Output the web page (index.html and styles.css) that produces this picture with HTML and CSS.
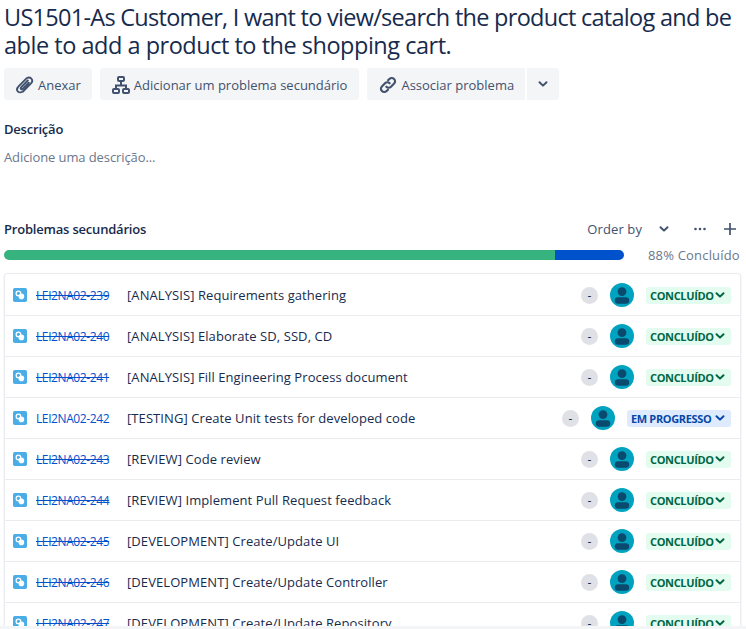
FILE: index.html
```html
<!DOCTYPE html>
<html lang="en">
<head>
<meta charset="UTF-8">
<title>US1501</title>
<link rel="stylesheet" href="styles.css">
</head>
<body>

<svg class="defs" width="0" height="0">
  <symbol id="chev" viewBox="0 0 12 12"><path d="M2.5 4.2 6 7.6l3.5-3.4" fill="none" stroke="currentColor" stroke-width="2" stroke-linecap="round" stroke-linejoin="round"/></symbol>
  <symbol id="subtask" viewBox="0 0 16 16"><rect width="16" height="16" rx="2" fill="#4BADE8"/><circle cx="6.200" cy="6.200" r="2.600" fill="#4BADE8" stroke="#fff" stroke-width="1.400"/><circle cx="9.600" cy="9.600" r="3.200" fill="#fff"/></symbol>
  <symbol id="user" viewBox="0 0 24 24"><circle cx="12" cy="12" r="12" fill="#00A3BF"/><circle cx="12" cy="8.6" r="4.4" fill="#0B4A6F"/><rect x="4.8" y="14.2" width="14.4" height="6.6" rx="3.3" fill="#0B4A6F"/></symbol>
</svg>

<div class="page">
  <h1>US1501-As Customer, I want to view/search the product catalog and be <span class="title-end">able to add a product to the shopping cart.</span></h1>

  <div class="toolbar">
    <button class="btn btn-attach">
      <svg width="20" height="20" viewBox="0 0 20 20"><path d="M8 16.6 16 8.4c1.5-1.6 1.4-3.7.1-5-1.3-1.300-3.400-1.300-4.900.2L3.800 11.200c-2 2-2 4.200-.8 5.400 1.200 1.200 3.400 1.200 5.400-.8l6.200-6.300M12.800 5.500 6.300 12.100c-.7.800-.7 1.500-.3 1.900.4.400 1.200.4 1.900-.3l5.900-6" fill="none" stroke="currentColor" stroke-width="1.900" stroke-linecap="round"/></svg>
      Anexar
    </button>
    <button class="btn">
      <svg width="20" height="20" viewBox="0 0 20 20" fill="none" stroke="currentColor" stroke-width="2"><rect x="7" y="2" width="6" height="4" rx="1"/><rect x="2" y="14" width="6" height="4" rx="1"/><rect x="12" y="14" width="6" height="4" rx="1"/><path d="M10 6v4.500M5 14v-3.500h10V14"/></svg>
      Adicionar um problema secundário
    </button>
    <div class="split">
      <button class="btn btn-left">
        <svg width="20" height="20" viewBox="0 0 20 20" fill="none" stroke="currentColor" stroke-width="2.100" stroke-linecap="round"><path d="M8.300 11.700a3.300 3.300 0 0 0 4.700 0l3.100-3.100a3.300 3.300 0 0 0-4.700-4.700L10 5.300"/><path d="M11.700 8.300a3.300 3.300 0 0 0-4.700 0l-3.100 3.100a3.300 3.300 0 0 0 4.700 4.700l1.400-1.400"/></svg>
        Associar problema
      </button>
      <button class="btn btn-right"><svg width="12" height="12"><use href="#chev"/></svg></button>
    </div>
  </div>

  <h2 class="desc-title">Descrição</h2>
  <p class="desc-empty">Adicione uma descrição...</p>

  <div class="sub-head">
    <h2>Problemas secundários</h2>
    <div class="sub-actions">
      <span>Order by</span>
      <svg class="order-chev" width="12" height="12"><use href="#chev"/></svg>
      <svg class="more" width="16" height="16" viewBox="0 0 16 16" fill="currentColor"><circle cx="3.500" cy="8" r="1.300"/><circle cx="8" cy="8" r="1.300"/><circle cx="12.500" cy="8" r="1.300"/></svg>
      <svg class="plus" width="14" height="14" viewBox="0 0 14 14" fill="none" stroke="currentColor" stroke-width="1.700"><path d="M7 1v12M1 7h12"/></svg>
    </div>
  </div>

  <div class="progress-row">
    <div class="bar"><div class="bar-done"></div><div class="bar-doing"></div></div>
    <span class="pct">88% Concluído</span>
  </div>

  <div class="card">
    <div class="row">
      <svg class="type"><use href="#subtask"/></svg>
      <a class="key done">LEI2NA02-239</a>
      <span class="summary">[ANALYSIS] Requirements gathering</span>
      <span class="prio">-</span>
      <svg class="avatar"><use href="#user"/></svg>
      <span class="status ok">CONCLUÍDO<svg width="12" height="12"><use href="#chev"/></svg></span>
    </div>
    <div class="row">
      <svg class="type"><use href="#subtask"/></svg>
      <a class="key done">LEI2NA02-240</a>
      <span class="summary">[ANALYSIS] Elaborate SD, SSD, CD</span>
      <span class="prio">-</span>
      <svg class="avatar"><use href="#user"/></svg>
      <span class="status ok">CONCLUÍDO<svg width="12" height="12"><use href="#chev"/></svg></span>
    </div>
    <div class="row">
      <svg class="type"><use href="#subtask"/></svg>
      <a class="key done">LEI2NA02-241</a>
      <span class="summary">[ANALYSIS] Fill Engineering Process document</span>
      <span class="prio">-</span>
      <svg class="avatar"><use href="#user"/></svg>
      <span class="status ok">CONCLUÍDO<svg width="12" height="12"><use href="#chev"/></svg></span>
    </div>
    <div class="row">
      <svg class="type"><use href="#subtask"/></svg>
      <a class="key">LEI2NA02-242</a>
      <span class="summary">[TESTING] Create Unit tests for developed code</span>
      <span class="prio">-</span>
      <svg class="avatar"><use href="#user"/></svg>
      <span class="status doing">EM PROGRESSO<svg width="12" height="12"><use href="#chev"/></svg></span>
    </div>
    <div class="row">
      <svg class="type"><use href="#subtask"/></svg>
      <a class="key done">LEI2NA02-243</a>
      <span class="summary">[REVIEW] Code review</span>
      <span class="prio">-</span>
      <svg class="avatar"><use href="#user"/></svg>
      <span class="status ok">CONCLUÍDO<svg width="12" height="12"><use href="#chev"/></svg></span>
    </div>
    <div class="row">
      <svg class="type"><use href="#subtask"/></svg>
      <a class="key done">LEI2NA02-244</a>
      <span class="summary">[REVIEW] Implement Pull Request feedback</span>
      <span class="prio">-</span>
      <svg class="avatar"><use href="#user"/></svg>
      <span class="status ok">CONCLUÍDO<svg width="12" height="12"><use href="#chev"/></svg></span>
    </div>
    <div class="row">
      <svg class="type"><use href="#subtask"/></svg>
      <a class="key done">LEI2NA02-245</a>
      <span class="summary">[DEVELOPMENT] Create/Update UI</span>
      <span class="prio">-</span>
      <svg class="avatar"><use href="#user"/></svg>
      <span class="status ok">CONCLUÍDO<svg width="12" height="12"><use href="#chev"/></svg></span>
    </div>
    <div class="row">
      <svg class="type"><use href="#subtask"/></svg>
      <a class="key done">LEI2NA02-246</a>
      <span class="summary">[DEVELOPMENT] Create/Update Controller</span>
      <span class="prio">-</span>
      <svg class="avatar"><use href="#user"/></svg>
      <span class="status ok">CONCLUÍDO<svg width="12" height="12"><use href="#chev"/></svg></span>
    </div>
    <div class="row">
      <svg class="type"><use href="#subtask"/></svg>
      <a class="key done">LEI2NA02-247</a>
      <span class="summary">[DEVELOPMENT] Create/Update Repository</span>
      <span class="prio">-</span>
      <svg class="avatar"><use href="#user"/></svg>
      <span class="status ok">CONCLUÍDO<svg width="12" height="12"><use href="#chev"/></svg></span>
    </div>
  </div>
</div>

<div class="fade"></div>

</body>
</html>
```

FILE: styles.css
```css
/* page */
html, body {
  margin: 0;
  padding: 0;
  height: 629px;
  overflow: hidden;
  background: #fff;
}
body {
  font-family: "Open Sans", "Noto Sans", Arial, sans-serif;
  font-size: 13px;
  color: #172B4D;
}
.defs {
  position: absolute;
}
.page {
  padding: 0 4px;
}
h1 {
  margin: 0;
  padding-top: 3px;
  font-size: 23.500px;
  line-height: 28px;
  font-weight: 400;
  letter-spacing: -0.72px;
  width: 738px;
}
.title-end {
  display: block;
  letter-spacing: -0.48px;
}
h2 {
  margin: 0;
  font-size: 13px;
  font-weight: 600;
  line-height: 18px;
  letter-spacing: -0.2px;
}

/* buttons */
.toolbar {
  display: flex;
  gap: 8px;
  margin-top: 9px;
}
.btn {
  display: flex;
  align-items: center;
  gap: 3px;
  height: 32px;
  padding: 1px 12px 0 11px;
  border: 0;
  border-radius: 3px;
  background: #F4F5F7;
  color: #42526E;
  font: inherit;
}
.btn-attach {
  padding-right: 11px;
}
.split {
  display: flex;
  gap: 2px;
}
.btn-left {
  border-radius: 3px 0 0 3px;
  padding-right: 11px;
}
.btn-right {
  border-radius: 0 3px 3px 0;
  padding: 0 10px;
}

/* description */
.desc-title {
  margin-top: 20px;
}
.desc-empty {
  margin: 10px 0 0;
  line-height: 18px;
  color: #6B778C;
  letter-spacing: -0.1px;
}

/* child issues */
.sub-head {
  display: flex;
  justify-content: space-between;
  align-items: center;
  margin-top: 53px;
  height: 20px;
}
.sub-actions {
  display: flex;
  align-items: center;
  color: #42526E;
  padding-right: 5px;
  letter-spacing: 0.1px;
}
.order-chev {
  margin-left: 16px;
}
.more {
  margin-left: 22px;
}
.plus {
  margin-left: 15px;
}
.progress-row {
  display: flex;
  align-items: center;
  margin-top: 6px;
  height: 20px;
}
.bar {
  display: flex;
  width: 620px;
  height: 10px;
  border-radius: 5px;
  overflow: hidden;
}
.bar-done {
  width: 551px;
  background: #36B37E;
}
.bar-doing {
  flex: 1;
  background: #0052CC;
}
.pct {
  margin-left: 24px;
  color: #6B778C;
  white-space: nowrap;
  letter-spacing: 0.18px;
}
.card {
  box-sizing: border-box;
  margin-top: 8px;
  padding-top: 1px;
  width: 737px;
  border: 1px solid #EBECF0;
  border-radius: 3px;
  box-shadow: 0 1px 2px rgba(9, 30, 66, 0.13);
}
.row {
  display: flex;
  align-items: center;
  height: 40px;
  padding: 0 9px 0 8px;
  border-bottom: 1px solid #EBECF0;
}
.type {
  width: 14px;
  height: 14px;
  flex: none;
}
.key {
  margin-left: 9px;
  width: 91px;
  flex: none;
  font-size: 12px;
  color: #0052CC;
  letter-spacing: -0.4px;
}
.key.done {
  text-decoration: line-through;
}
.summary {
  flex: 1;
  white-space: nowrap;
  letter-spacing: 0.08px;
}
.prio {
  width: 17px;
  height: 17px;
  border-radius: 50%;
  background: #DFE1E6;
  text-align: center;
  line-height: 17px;
  font-size: 12px;
  flex: none;
}
.avatar {
  width: 24px;
  height: 24px;
  margin-left: 12px;
  flex: none;
}
.status {
  display: flex;
  align-items: center;
  justify-content: space-between;
  height: 17px;
  margin-left: 12px;
  padding: 0 5px 0 4px;
  border-radius: 3px;
  font-size: 11px;
  font-weight: 700;
  letter-spacing: -0.35px;
  flex: none;
}
.status.ok {
  background: #E3FCEF;
  color: #006644;
  width: 76px;
}
.status.doing {
  background: #DEEBFF;
  color: #0747A6;
  width: 95px;
}

/* grey strip along the window bottom */
.fade {
  position: fixed;
  left: 0;
  right: 0;
  bottom: 0;
  height: 3px;
  background: #F4F5F7;
}
```
